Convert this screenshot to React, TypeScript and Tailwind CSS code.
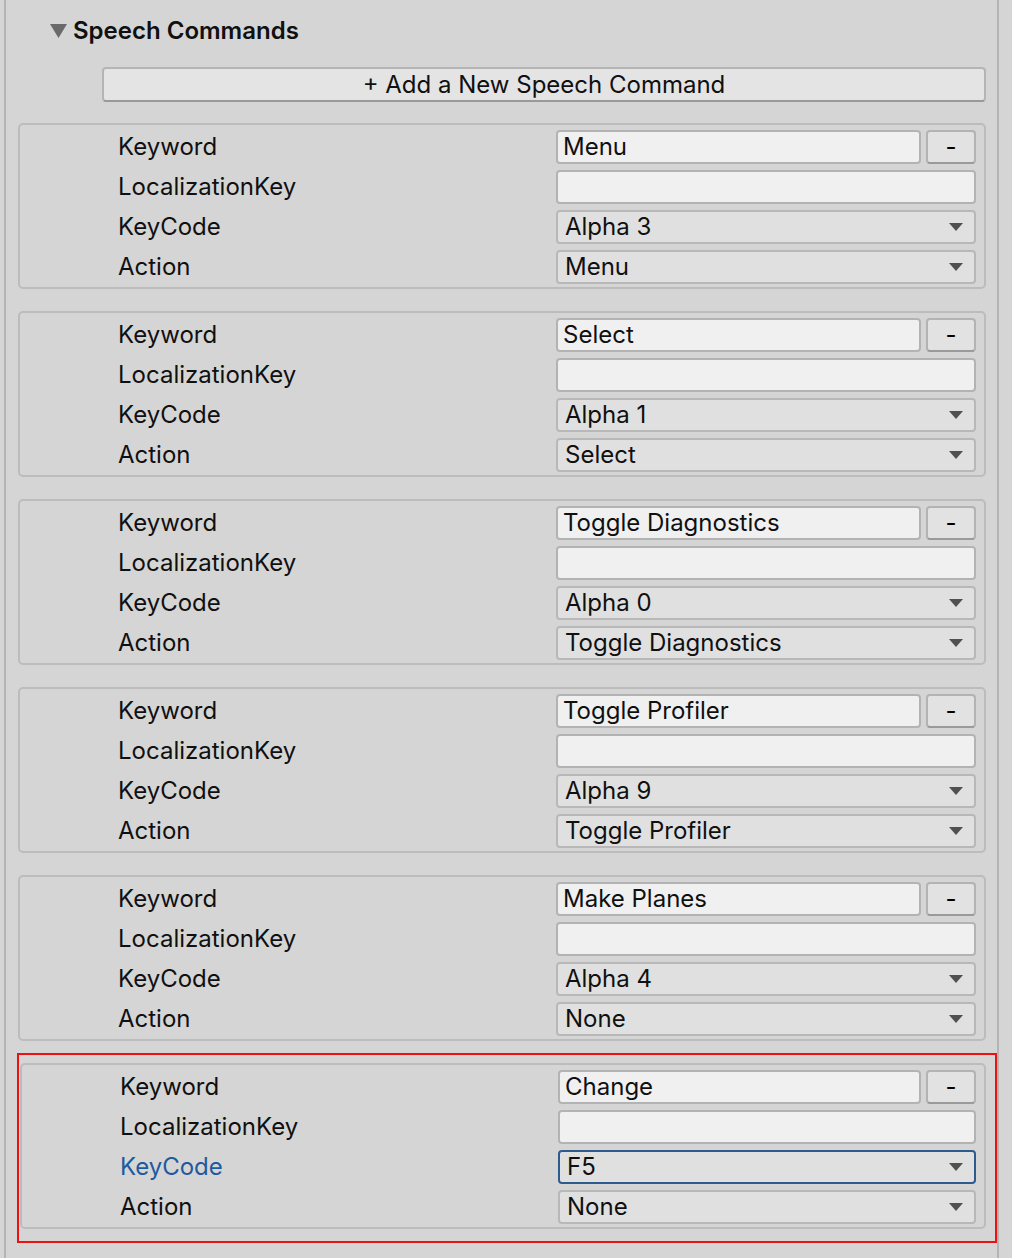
const cmds = [
  { k: "Menu", code: "Alpha 3", action: "Menu" },
  { k: "Select", code: "Alpha 1", action: "Select" },
  { k: "Toggle Diagnostics", code: "Alpha 0", action: "Toggle Diagnostics" },
  { k: "Toggle Profiler", code: "Alpha 9", action: "Toggle Profiler" },
  { k: "Make Planes", code: "Alpha 4", action: "None" },
  { k: "Change", code: "F5", action: "None", focus: true },
]

function Caret() {
  return (
    <svg width="16" height="10" viewBox="0 0 16 10" className="shrink-0">
      <path d="M1 1h14L8 9z" fill="#505050" />
    </svg>
  )
}

function Row({ label, blue, children }: { label: string; blue?: boolean; children: React.ReactNode }) {
  return (
    <div className="flex h-[40px] items-center">
      <div className={`w-[536px] pl-[98px] ${blue ? "text-[#1f5a9e]" : "text-[#101010]"}`}>{label}</div>
      <div className="flex flex-1 items-center gap-[5px]">{children}</div>
    </div>
  )
}

function Field({ v }: { v: string }) {
  return (
    <div className="flex h-[34px] flex-1 items-center rounded-[4px] border-2 border-[#b3b3b3] bg-[#f0f0f0] px-[5px] text-[#101010]">
      {v}
    </div>
  )
}

function Drop({ v, focus }: { v: string; focus?: boolean }) {
  return (
    <div
      className={`flex h-[34px] flex-1 items-center justify-between rounded-[4px] border-2 pl-[7px] pr-[10px] text-[#101010] ${
        focus ? "border-[#2d5b8e] bg-[#e0e0e0]" : "border-[#b8b8b8] bg-[#e0e0e0]"
      }`}
    >
      <span>{v}</span>
      <Caret />
    </div>
  )
}

function Card({ c }: { c: (typeof cmds)[number] }) {
  return (
    <div className="rounded-[5px] border-2 border-[#bcbcbc] pb-0 pl-0 pr-[8px] pt-[2px]">
      <Row label="Keyword">
        <Field v={c.k} />
        <div className="flex h-[34px] w-[50px] items-center justify-center rounded-[4px] border-2 border-[#b3b3b3] border-b-[#9a9a9a] bg-[#e2e2e2]">-</div>
      </Row>
      <Row label="LocalizationKey">
        <Field v="" />
      </Row>
      <Row label="KeyCode" blue={c.focus}>
        <Drop v={c.code} focus={c.focus} />
      </Row>
      <Row label="Action">
        <Drop v={c.action} />
      </Row>
    </div>
  )
}

export default function App() {
  return (
    <div
      className="h-[1258px] w-[1012px] bg-[#d5d5d5] text-[24px]"
      style={{ fontFamily: "Inter, 'Noto Sans', sans-serif" }}
    >
      <div className="ml-[4px] h-full w-[995px] border-x-2 border-[#b5b5b5] pl-[12px] pr-[11px]">
        <div className="flex h-[62px] items-center gap-[6px] pl-[32px] font-semibold text-[#101010]">
          <svg width="17" height="14" viewBox="0 0 17 14">
            <path d="M0 0h17L8.5 14z" fill="#6a6a6a" />
          </svg>
          Speech Commands
        </div>
        <div className="ml-[84px] mt-[5px] flex h-[35px] items-center justify-center rounded-[4px] border-2 border-[#b5b5b5] border-b-[#999] bg-[#e4e4e4] text-[#101010]">
          + Add a New Speech Command
        </div>
        <div className="mt-[21px] flex flex-col gap-[22px]">
          {cmds.slice(0, 5).map((c) => (
            <div key={c.k} className="w-[968px]">
              <Card c={c} />
            </div>
          ))}
          <div className="-ml-[1px] -mt-[10px] w-[980px] border-2 border-[#ee1111] pb-[12px] pl-[1px] pr-[9px] pt-[8px]">
            <Card c={cmds[5]} />
          </div>
        </div>
      </div>
    </div>
  )
}
